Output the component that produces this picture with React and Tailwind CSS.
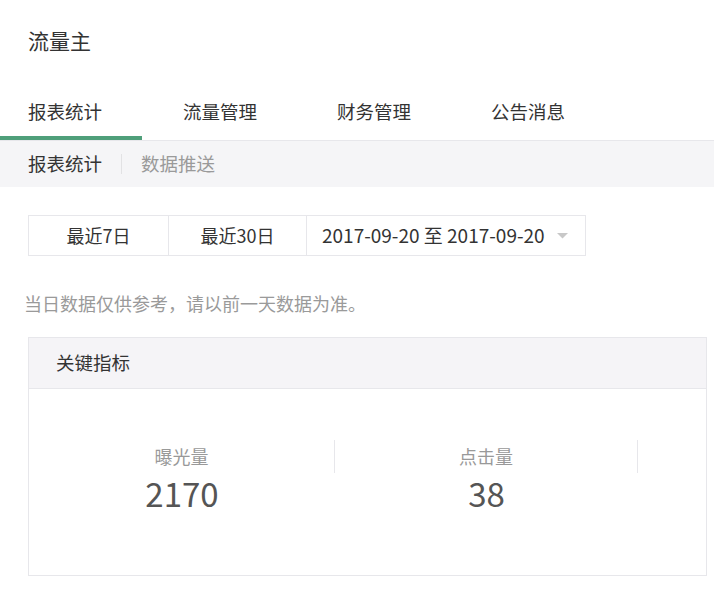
import React from "react";

export default function App() {
  return (
    <div className="w-[714px] h-[592px] bg-white overflow-hidden text-[#333] font-['Noto_Sans_CJK_SC',sans-serif]">
      <div className="pl-[28px] pt-[26px] h-[88px] text-[21px] leading-[28px] text-[#333]">流量主</div>
      <div className="flex h-[53px] border-b border-[#e7e7eb]">
        <div className="relative w-[142px] pl-[28px] pt-[10px] text-[18.5px] leading-[26px] text-[#333]">
          报表统计
          <div className="absolute left-0 right-0 bottom-[0px] h-[4px] bg-[#4f9f7a]" />
        </div>
        <div className="w-[154px] pl-[41px] pt-[10px] text-[18.5px] leading-[26px] text-[#333]">流量管理</div>
        <div className="w-[154px] pl-[41px] pt-[10px] text-[18.5px] leading-[26px] text-[#333]">财务管理</div>
        <div className="pl-[41px] pt-[10px] text-[18.5px] leading-[26px] text-[#333]">公告消息</div>
      </div>
      <div className="flex items-center h-[46px] bg-[#f5f5f7] pl-[28px] text-[18.5px]">
        <span className="text-[#333]">报表统计</span>
        <span className="mx-[19px] w-px h-[20px] bg-[#e2e2e4]" />
        <span className="text-[#9a9a9a]">数据推送</span>
      </div>
      <div className="pt-[28px] pl-[28px]">
        <div className="flex h-[41px] w-[558px] border border-[#e7e7eb] text-[18px] text-[#333]">
          <div className="w-[140px] flex items-center justify-center border-r border-[#e7e7eb]">最近7日</div>
          <div className="w-[138px] flex items-center justify-center border-r border-[#e7e7eb]">最近30日</div>
          <div className="flex-1 flex items-center pl-[15px] gap-[12px]">
            <span className="text-[19px]">2017-09-20 至 2017-09-20</span>
            <svg width="11" height="6" viewBox="0 0 11 6" className="mt-[1px]"><path d="M0 0 L11 0 L5.5 5.5 Z" fill="#c8c8c8" /></svg>
          </div>
        </div>
      </div>
      <div className="pl-[24px] pt-[35px] text-[18px] leading-[24px] text-[#9a9a9a]">当日数据仅供参考，请以前一天数据为准。</div>
      <div className="ml-[28px] mt-[22px] w-[679px] h-[239px] border border-[#e7e7eb] flex flex-col">
        <div className="h-[51px] bg-[#f5f4f7] border-b border-[#e7e7eb] flex items-center pl-[27px] text-[18.5px] text-[#333]">关键指标</div>
        <div className="flex pt-[51px]">
          <div className="w-[306px] flex flex-col items-center border-r border-[#e7e7eb] h-[33px]">
            <span className="text-[18px] leading-[22px] text-[#999] mt-[5px]">曝光量</span>
          </div>
          <div className="w-[303px] flex flex-col items-center border-r border-[#e7e7eb] h-[33px]">
            <span className="text-[18px] leading-[22px] text-[#999] mt-[5px]">点击量</span>
          </div>
        </div>
        <div className="flex">
          <div className="w-[306px] text-center text-[33px] leading-[40px] text-[#555]">2170</div>
          <div className="w-[303px] text-center text-[33px] leading-[40px] text-[#555]">38</div>
        </div>
      </div>
    </div>
  );
}
